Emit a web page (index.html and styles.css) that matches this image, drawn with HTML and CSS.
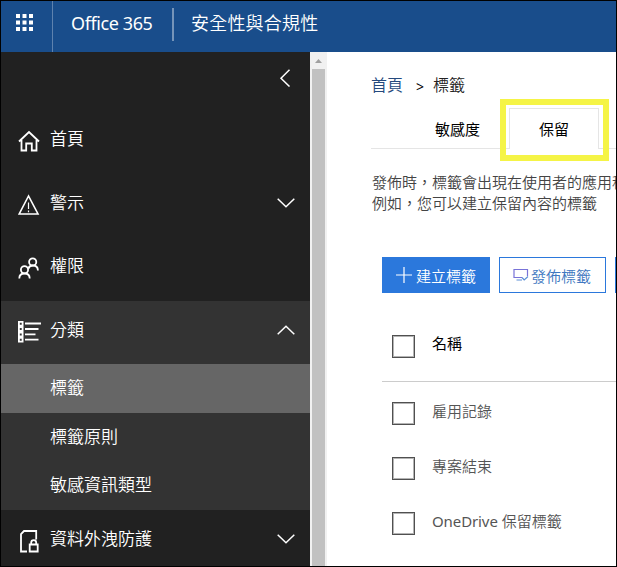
FILE: index.html
```html
<!DOCTYPE html>
<html lang="zh-Hant">
<head>
<meta charset="utf-8">
<title>安全性與合規性</title>
<link rel="stylesheet" href="styles.css">
</head>
<body>
<div class="app">
  <header class="topbar">
    <div class="launcher">
      <svg width="18" height="18" viewBox="0 0 18 18" fill="#fff"><path d="M0 0h4v4H0zM6.500 0h4v4h-4zM13 0h4v4h-4zM0 6.500h4v4H0zM6.500 6.500h4v4h-4zM13 6.500h4v4h-4zM0 13h4v4H0zM6.500 13h4v4h-4zM13 13h4v4h-4z"/></svg>
    </div>
    <div class="brand">Office 365</div>
    <div class="product">安全性與合規性</div>
  </header>
  <div class="body">
    <nav class="sidebar">
      <div class="collapse"><svg width="12" height="18" viewBox="0 0 12 18"><path d="M10.500 .8 2 9.200l8.500 8.300"/></svg></div>
      <div class="item">
        <svg class="icon" width="22" height="22" viewBox="0 0 22 22"><path d="M1 11.500 11 2l10 9.500M3.500 10v10.500h4.700v-7h5.600v7h4.700V10"/></svg>
        <span>首頁</span>
      </div>
      <div class="item">
        <svg class="icon" width="22" height="22" viewBox="0 0 22 22"><path d="M10.500 2 1.200 20h18.800z" stroke-width="1.600"/><path d="M10.500 8.500v6.500M10.500 16.500v1.800" stroke-width="1.200"/></svg>
        <span>警示</span>
        <svg class="chevron" width="18" height="10" viewBox="0 0 18 10"><path d="m.7.700 8.300 8 8.300-8"/></svg>
      </div>
      <div class="item perm">
        <svg class="icon" width="22" height="22" viewBox="0 0 22 22"><circle cx="14.700" cy="4.900" r="3.600"/><circle cx="6.500" cy="12.800" r="3.600"/><path d="M1.300 21.500c0-3.200 2.200-5 5.200-5s5.200 1.800 5.200 5M10.300 11.700c.5-2 2.200-3.200 4.400-3.200 3 0 5.200 1.800 5.200 5"/></svg>
        <span>權限</span>
      </div>
      <div class="group">
        <div class="item parent">
          <svg class="icon list" width="24" height="22" viewBox="0 0 24 22"><path d="M.9.900h3.700v3.700H.9zM.9 6.200h3.700v3.700H.9zM.9 11.600h3.700v3.700H.9zM.9 16.900h3.700v3.700H.9zM7 2.500h16M7 8h13.500M7 13.300h10.500M7 18.700h13.500"/></svg>
          <span>分類</span>
          <svg class="chevron" width="18" height="10" viewBox="0 0 18 10"><path d="m.7 9.300 8.300-8 8.300 8"/></svg>
        </div>
        <div class="sub selected">標籤</div>
        <div class="sub">標籤原則</div>
        <div class="sub">敏感資訊類型</div>
      </div>
      <div class="item last">
        <svg class="icon" width="22" height="23" viewBox="0 0 22 23"><path d="M9 21.500H3V4l3-3h12.200v8.500M11.700 14.500h8v7h-8zM13.200 14.500v-2c0-3.300 5-3.300 5 0v2"/></svg>
        <span>資料外洩防護</span>
        <svg class="chevron" width="18" height="10" viewBox="0 0 18 10"><path d="m.7.700 8.300 8 8.300-8"/></svg>
      </div>
    </nav>
    <div class="scrollbar">
      <svg width="7" height="4" viewBox="0 0 7 4"><path d="M0 4 3.500 0 7 4z" fill="#a0a0a0"/></svg>
      <div class="thumb"></div>
    </div>
    <main class="content">
      <div class="crumbs"><a>首頁</a><span class="sep">&gt;</span><span>標籤</span></div>
      <div class="tabs">
        <div class="tab">敏感度</div>
        <div class="tab active">保留<div class="highlight"></div></div>
        <div class="rest"></div>
      </div>
      <p class="intro">發佈時，標籤會出現在使用者的應用程<br>例如，您可以建立保留內容的標籤</p>
      <div class="actions">
        <div class="btn primary"><svg width="16" height="16" viewBox="0 0 16 16"><path d="M8 0v16M0 8h16" stroke="#fff" stroke-width="1.200"/></svg><span>建立標籤</span></div>
        <div class="btn"><svg width="16" height="14" viewBox="0 0 16 14" fill="none" stroke-width="1.200"><path d="M9 9.500H1V1.500h13.500V8" stroke="#7873d8"/><path d="M3.500 12h5.500M9 9.500l2.200 2.500 3.800-3.500" stroke="#5c90d6"/></svg><span>發佈標籤</span></div>
        <div class="btn"></div>
      </div>
      <div class="table">
        <div class="row head"><i class="check"></i><span>名稱</span></div>
        <div class="row"><i class="check"></i><span>雇用記錄</span></div>
        <div class="row"><i class="check"></i><span>專案結束</span></div>
        <div class="row"><i class="check"></i><span><span class="latin">OneDrive</span> 保留標籤</span></div>
      </div>
    </main>
  </div>
</div>
</body>
</html>
```

FILE: styles.css
```css
* { box-sizing: border-box; }
body {
  margin: 0;
  font-family: "Noto Sans", "Noto Sans CJK TC", sans-serif;
  font-weight: 350;
}
svg { display: block; flex: none; }
.app {
  width: 617px;
  height: 567px;
  border: 1px solid #000;
  overflow: hidden;
  display: flex;
  flex-direction: column;
  background: #fff;
}
.topbar {
  height: 51px;
  flex: none;
  display: flex;
  background: #194d8b;
  color: #fff;
  white-space: nowrap;
}
.launcher {
  width: 52px;
  border-right: 1px solid #5e82ae;
  padding: 13px 0 0 15px;
}
.brand {
  width: 121px;
  height: 33px;
  margin-top: 7px;
  padding-left: 18px;
  border-right: 2px solid #7594b9;
  font-size: 18px;
  font-weight: 400;
  line-height: 31px;
  letter-spacing: -0.4px;
}
.product {
  padding-left: 17px;
  font-size: 18px;
  line-height: 44px;
  letter-spacing: 0.2px;
}
.body { display: flex; flex: 1; min-height: 0; }
.sidebar {
  width: 309px;
  flex: none;
  background: #212121;
  color: #fff;
  font-size: 17px;
  line-height: 24px;
}
.sidebar svg { fill: none; stroke: #fff; stroke-width: 1.5; }
.collapse { height: 56px; padding: 17px 0 0 278px; }
.item {
  height: 64px;
  padding: 19px 15px 0 17px;
  display: flex;
  align-items: flex-start;
}
.icon { margin: 3px 10px 0 0; }
.icon.list { margin: 3px 8px 0 0; }
.sidebar .icon { stroke-width: 1.8; }
.chevron { margin: 7px 0 0 auto; }
.perm { height: 65px; padding-top: 18px; }
.group { background: #333; height: 209px; }
.parent { height: 63px; padding-top: 17px; }
.sub { height: 48px; padding-left: 49px; line-height: 47px; }
.sub.selected { height: 49px; background: #666; }
.last { padding-top: 17px; height: 56px; }
.scrollbar {
  width: 17px;
  flex: none;
  padding: 7px 2px 0;
  background: #f1f1f1;
  display: flex;
  flex-direction: column;
}
.scrollbar svg { margin: 0 auto 6px 3px; }
.thumb { flex: 1; background: #c1c1c1; }
.content { flex: 1; min-width: 0; overflow: hidden; padding: 21px 0 0 44px; }
.crumbs {
  height: 24px;
  display: flex;
  font-size: 16px;
  line-height: 25px;
  color: #222;
}
.crumbs a { color: #24497d; }
.sep { width: 30px; padding-left: 13px; font-size: 14px; line-height: 27px; color: #000; font-weight: 400; }
.tabs {
  display: flex;
  height: 41px;
  margin-top: 11px;
  font-size: 15px;
  font-weight: 400;
  line-height: 42px;
  color: #000;
}
.tab { width: 138px; padding-left: 64px; border-bottom: 1px solid #e5e5e5; flex: none; }
.tab.active {
  position: relative;
  width: 90px;
  padding-left: 29px;
  border: 1px solid #e5e5e5;
  border-bottom: 0;
  line-height: 40px;
}
.rest { flex: 1; border-bottom: 1px solid #e5e5e5; }
.highlight {
  position: absolute;
  left: -10px;
  top: -10px;
  width: 109px;
  height: 62px;
  border: 6px solid #f5f446;
}
.intro {
  margin: 23px 0 0 1px;
  font-size: 15px;
  line-height: 21px;
  color: #444;
  white-space: nowrap;
}
.actions { display: flex; margin: 43px 0 0 11px; }
.btn {
  width: 107px;
  height: 36px;
  flex: none;
  margin-right: 9px;
  padding-left: 13px;
  border: 1px solid #2b78dc;
  display: flex;
  align-items: center;
  font-size: 15px;
  line-height: 36px;
  color: #3e77c0;
}
.btn span { margin: 1px 0 0 2px; }
.btn.primary { width: 108px; background: #2b78dc; color: #fff; }
.btn.primary span { margin-left: 4px; }
.table { margin: 28px 0 0 11px; font-size: 15px; line-height: 24px; color: #555; }
.row { display: flex; height: 55px; padding: 10px 0 0 10px; }
.row > span { margin: -3px 0 0 17px; white-space: nowrap; }
.head {
  height: 61px;
  margin-bottom: 10px;
  padding-top: 14px;
  border-bottom: 1px solid #ccc;
  color: #000;
  font-weight: 400;
}
.head > span { margin-top: -4px; }
.check { width: 23px; height: 23px; flex: none; border: 1px solid #505050; box-shadow: inset 0 0 0 1px #b4b4b4; }
.latin { font-weight: 400; letter-spacing: -0.1px; }
```
